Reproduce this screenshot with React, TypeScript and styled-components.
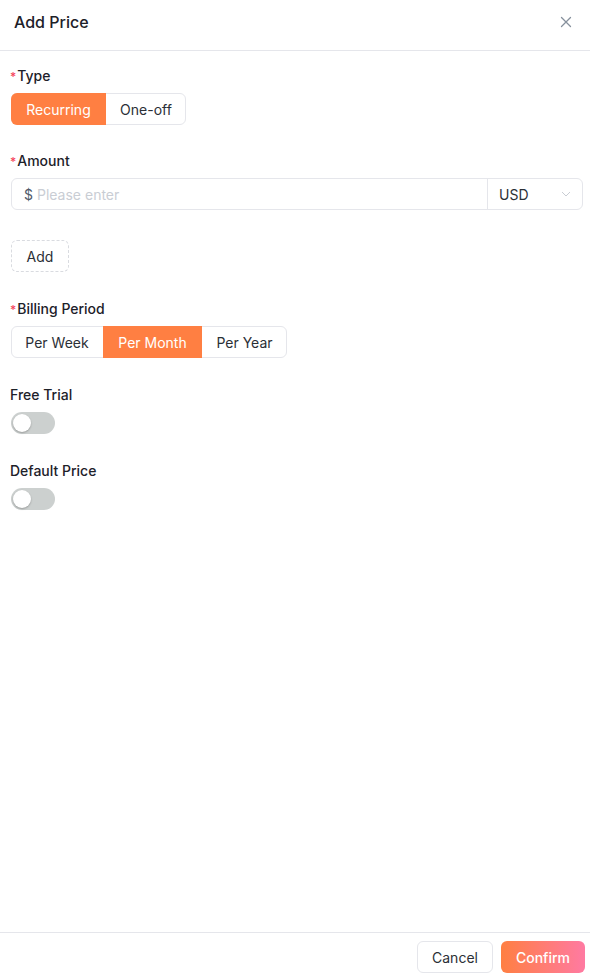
import styled, { createGlobalStyle } from "styled-components"

const GlobalStyle = createGlobalStyle`
    html, body {
        margin: 0;
        padding: 0;
        background: #fff;
    }
    body {
        font-family: Inter, "Noto Sans", "Liberation Sans", sans-serif;
        color: #1d2129;
        -webkit-font-smoothing: antialiased;
    }
    * {
        box-sizing: border-box;
    }
`;

type Option = { label: string; width: number }

const typeOptions: Option[] = [
    { label: 'Recurring', width: 95 },
    { label: 'One-off', width: 80 },
]

const periodOptions: Option[] = [
    { label: 'Per Week', width: 92 },
    { label: 'Per Month', width: 99 },
    { label: 'Per Year', width: 85 },
]

function Segmented({ options, active }: { options: Option[]; active: string }) {
    return <SegGroup>
        {options.map((o) => (
            <SegButton key={o.label} $active={o.label === active} $w={o.width}>
                {o.label}
            </SegButton>
        ))}
    </SegGroup>
}

function Label({ text, required }: { text: string; required?: boolean }) {
    return <FieldLabel>
        {required && <Star>*</Star>}
        {text}
    </FieldLabel>
}

export default function App() {
    return <Drawer>
        <GlobalStyle />
        <Header>
            <Title>Add Price</Title>
            <CloseButton aria-label="close">
                <svg width="12" height="12" viewBox="0 0 12 12">
                    <path d="M1.5 1.5 L10.5 10.5 M10.5 1.5 L1.5 10.5" stroke="#86909c" strokeWidth="1.3" strokeLinecap="round" />
                </svg>
            </CloseButton>
        </Header>
        <Body>
            <Field $mb={25}>
                <Label text="Type" required />
                <Segmented options={typeOptions} active="Recurring" />
            </Field>
            <Field $mb={30}>
                <Label text="Amount" required />
                <InputGroup>
                    <Prefix>$</Prefix>
                    <AmountInput placeholder="Please enter" />
                    <CurrencySelect>
                        <span>USD</span>
                        <svg width="12" height="12" viewBox="0 0 12 12">
                            <path d="M2 4 L6 8 L10 4" fill="none" stroke="#c9cdd4" strokeWidth="1" />
                        </svg>
                    </CurrencySelect>
                </InputGroup>
            </Field>
            <Field $mb={26}>
                <DashedButton>Add</DashedButton>
            </Field>
            <Field $mb={26}>
                <Label text="Billing Period" required />
                <Segmented options={periodOptions} active="Per Month" />
            </Field>
            <Field $mb={26}>
                <Label text="Free Trial" />
                <Switch><Knob /></Switch>
            </Field>
            <Field $mb={26}>
                <Label text="Default Price" />
                <Switch><Knob /></Switch>
            </Field>
        </Body>
        <Footer>
            <CancelButton>Cancel</CancelButton>
            <ConfirmButton>Confirm</ConfirmButton>
        </Footer>
    </Drawer>
}

const Drawer = styled.div`
    height: 100vh;
    display: flex;
    flex-direction: column;
    background: #fff;
`;

const Header = styled.div`
    height: 51px;
    flex-shrink: 0;
    padding: 0 17px 6px 14px;
    display: flex;
    align-items: center;
    justify-content: space-between;
    border-bottom: 1px solid #e5e6eb;
`;

const Title = styled.h2`
    margin: 0;
    font-size: 16px;
    font-weight: 500;
    color: #1d2129;
`;

const CloseButton = styled.button`
    border: 0;
    background: none;
    padding: 0;
    width: 14px;
    height: 14px;
    display: flex;
    align-items: center;
    justify-content: center;
    cursor: pointer;
`;

const Body = styled.div`
    flex: 1;
    padding: 14px 7px 0 11px;
`;

const Field = styled.div<{ $mb: number }>`
    display: flex;
    flex-direction: column;
    align-items: flex-start;
    margin-bottom: ${(p) => p.$mb}px;
`;

const FieldLabel = styled.div`
    height: 22px;
    line-height: 22px;
    margin-left: -1px;
    margin-bottom: 6px;
    font-size: 14px;
    font-weight: 500;
    color: #1d2129;
`;

const Star = styled.span`
    color: #f5455c;
    margin-right: 1px;
    font-size: 12px;
`;

const SegGroup = styled.div`
    display: flex;
    height: 32px;
    border: 1px solid #e5e6eb;
    border-radius: 6px;
`;

const SegButton = styled.button<{ $active: boolean; $w: number }>`
    width: ${(p) => p.$w}px;
    margin: -1px 0;
    border: 0;
    padding: 0;
    font-family: inherit;
    font-size: 14px;
    font-weight: 400;
    color: ${(p) => (p.$active ? '#fff' : '#2b2f36')};
    background: ${(p) => (p.$active ? '#ff7f42' : 'transparent')};
    cursor: pointer;
    &:first-child {
        margin-left: -1px;
        border-radius: 6px 0 0 6px;
    }
    &:last-child {
        margin-right: -1px;
        border-radius: 0 6px 6px 0;
    }
`;

const InputGroup = styled.div`
    align-self: stretch;
    display: flex;
    align-items: center;
    height: 32px;
    border: 1px solid #e5e6eb;
    border-radius: 6px;
`;

const Prefix = styled.span`
    padding-left: 12px;
    margin-right: 4px;
    font-size: 14px;
    color: #4e5969;
`;

const AmountInput = styled.input`
    flex: 1;
    min-width: 0;
    height: 100%;
    border: 0;
    outline: none;
    padding: 0;
    font-family: inherit;
    font-size: 14px;
    color: #1d2129;
    background: transparent;
    &::placeholder {
        color: #c9cdd4;
    }
`;

const CurrencySelect = styled.div`
    width: 95px;
    height: 100%;
    border-left: 1px solid #e5e6eb;
    display: flex;
    align-items: center;
    justify-content: space-between;
    padding: 0 10px 0 11px;
    font-size: 14px;
    color: #2b2f36;
`;

const DashedButton = styled.button`
    width: 58px;
    height: 32px;
    border: 1px dashed #d9dbe0;
    border-radius: 6px;
    background: #fff;
    font-family: inherit;
    font-size: 14px;
    color: #2b2f36;
    cursor: pointer;
`;

const Switch = styled.div`
    width: 44px;
    height: 22px;
    border-radius: 11px;
    background: #ccd0cf;
    padding: 2px;
`;

const Knob = styled.div`
    width: 18px;
    height: 18px;
    border-radius: 50%;
    background: #fff;
    box-shadow: 0 1px 2px rgba(0, 0, 0, 0.25);
`;

const Footer = styled.div`
    flex-shrink: 0;
    display: flex;
    justify-content: flex-end;
    gap: 8px;
    padding: 8px 5px 3px;
    border-top: 1px solid #e5e6eb;
`;

const CancelButton = styled.button`
    width: 76px;
    height: 32px;
    border: 1px solid #e5e6eb;
    border-radius: 6px;
    background: #fff;
    font-family: inherit;
    font-size: 14px;
    color: #2b2f36;
    cursor: pointer;
`;

const ConfirmButton = styled.button`
    width: 84px;
    height: 32px;
    border: 0;
    border-radius: 6px;
    background: linear-gradient(90deg, #ff7f42 0%, #ff7aa2 100%);
    font-family: inherit;
    font-size: 14px;
    font-weight: 500;
    color: #fff;
    cursor: pointer;
`;
